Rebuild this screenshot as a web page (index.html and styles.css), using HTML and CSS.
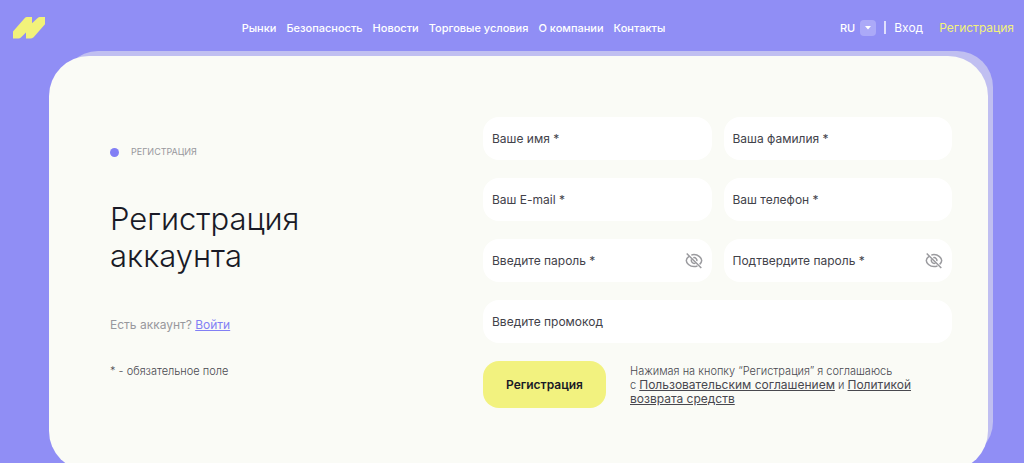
FILE: index.html
```html
<!DOCTYPE html>
<html lang="ru">
<head>
<meta charset="utf-8">
<meta name="viewport" content="width=device-width, initial-scale=1">
<title>Регистрация аккаунта</title>
<link rel="stylesheet" href="styles.css">
</head>
<body>
<header class="header">
  <a class="logo" href="#" aria-label="На главную">
    <svg width="32" height="22" viewBox="0 0 32 22" aria-hidden="true"><path d="M0 14.500 11.600 1.200Q12.600 0 14 0H19V6.200L24.700.9Q25.600 0 27 0H32V7.300L20.600 20.200Q19 21.500 17.500 21.500H13V15.500L7.900 20.600Q7 21.500 5.500 21.500H0Z" fill="#f2f27a"/></svg>
  </a>
  <nav class="nav">
    <a href="#">Рынки</a>
    <a href="#">Безопасность</a>
    <a href="#">Новости</a>
    <a href="#">Торговые условия</a>
    <a href="#">О компании</a>
    <a href="#">Контакты</a>
  </nav>
  <div class="account">
    <button class="lang" type="button">RU
      <span class="lang-arrow"><svg width="8" height="4" viewBox="0 0 8 4" aria-hidden="true"><path d="M1 0H7L4 3.500Z" fill="#fff"/></svg></span>
    </button>
    <span class="divider"></span>
    <a href="#">Вход</a>
    <a class="signup" href="#">Регистрация</a>
  </div>
</header>
<main class="card">
  <section class="intro">
    <p class="eyebrow">Регистрация</p>
    <h1 class="title">Регистрация аккаунта</h1>
    <p class="have-account">Есть аккаунт? <a href="#">Войти</a></p>
    <p class="required-note">* - обязательное поле</p>
  </section>
  <form class="form">
    <input class="input" type="text" aria-label="Ваше имя" placeholder="Ваше имя *">
    <input class="input" type="text" aria-label="Ваша фамилия" placeholder="Ваша фамилия *">
    <input class="input" type="email" aria-label="Ваш E-mail" placeholder="Ваш E-mail *">
    <input class="input" type="tel" aria-label="Ваш телефон" placeholder="Ваш телефон *">
    <div class="password">
      <input class="input" type="password" aria-label="Введите пароль" placeholder="Введите пароль *">
      <button class="eye" type="button" aria-label="Показать пароль"><svg width="18" height="18" viewBox="0 0 18 18" aria-hidden="true"><g fill="none" stroke="#9a9a9e" stroke-width="1.500"><path d="M1.700 1.500 16.300 16"/><path d="M4 4.300C2.300 5.500 1.300 7.200 1.300 8.500 1.300 11 4.600 14.600 9 14.600c1.300 0 2.500-.3 3.500-.8M6.300 3.100C7.100 2.800 8 2.600 9 2.600c4.400 0 7.700 3.500 7.700 6 0 1.200-.8 2.600-2.100 3.800"/><path d="M6.500 7.200A3 3 0 0 0 10.500 11.100M8.300 5.700A3 3 0 0 1 11.900 9.200"/></g></svg></button>
    </div>
    <div class="password">
      <input class="input" type="password" aria-label="Подтвердите пароль" placeholder="Подтвердите пароль *">
      <button class="eye" type="button" aria-label="Показать пароль"><svg width="18" height="18" viewBox="0 0 18 18" aria-hidden="true"><g fill="none" stroke="#9a9a9e" stroke-width="1.500"><path d="M1.700 1.500 16.300 16"/><path d="M4 4.300C2.300 5.500 1.300 7.200 1.300 8.500 1.300 11 4.600 14.600 9 14.600c1.300 0 2.500-.3 3.500-.8M6.300 3.100C7.100 2.800 8 2.600 9 2.600c4.400 0 7.700 3.500 7.700 6 0 1.200-.8 2.600-2.100 3.800"/><path d="M6.500 7.200A3 3 0 0 0 10.500 11.100M8.300 5.700A3 3 0 0 1 11.900 9.200"/></g></svg></button>
    </div>
    <input class="input wide" type="text" aria-label="Введите промокод" placeholder="Введите промокод">
    <div class="actions wide">
      <button class="submit" type="submit">Регистрация</button>
      <p class="terms">Нажимая на кнопку “Регистрация” я соглашаюсь<br>с <a href="#">Пользовательским соглашением</a> и <a href="#">Политикой возврата средств</a></p>
    </div>
  </form>
</main>
</body>
</html>
```

FILE: styles.css
```css
* {
  box-sizing: border-box;
}

body {
  margin: 0;
  background: #908ef5;
  color: #191a26;
  font-family: Inter, "Noto Sans", sans-serif;
  font-size: 12px;
  line-height: 16px;
}

a {
  color: inherit;
}

p,
h1 {
  margin: 0;
}

button {
  padding: 0;
  border: 0;
  background: none;
  color: inherit;
  font: inherit;
  cursor: pointer;
}

svg {
  display: block;
}

.header {
  display: grid;
  grid-template-columns: 1fr auto 1fr;
  align-items: center;
  height: 56px;
  padding: 0 10px 1px 13px;
  color: #fff;
}

.header a {
  text-decoration: none;
}

.logo {
  justify-self: start;
}

.nav {
  display: flex;
  gap: 10px;
  margin-right: 120px;
  font-size: 11px;
  font-weight: 500;
}

.account {
  display: flex;
  align-items: center;
  justify-self: end;
  gap: 8px;
}

.lang {
  display: flex;
  align-items: center;
  gap: 5px;
  font-size: 11px;
  font-weight: 500;
}

.lang-arrow {
  display: grid;
  place-items: center;
  width: 16px;
  height: 16px;
  border-radius: 4px;
  background: #aba9f8;
}

.divider {
  width: 2px;
  height: 13px;
  background: #e0dffc;
}

.signup {
  margin-left: 8px;
  color: #f2f27a;
}

.card {
  display: grid;
  grid-template-columns: 373fr 469fr;
  margin: 0 36px 0 49px;
  padding: 61px 36px 63px 61px;
  border-radius: 40px;
  background: #fafbf6;
  box-shadow: 9px -9px 0 -4px #c0bff1;
}

.eyebrow {
  display: flex;
  align-items: center;
  gap: 12px;
  margin-top: 27px;
  color: #98989d;
  font-size: 9px;
  text-transform: uppercase;
}

.eyebrow::before {
  width: 9px;
  height: 9px;
  border-radius: 50%;
  background: #827ff5;
  content: "";
}

.title {
  max-width: 240px;
  margin-top: 40px;
  font-size: 31px;
  font-weight: 300;
  line-height: 37px;
}

.have-account {
  margin-top: 43px;
  color: #98989d;
}

.have-account a {
  color: #827ff5;
}

.required-note {
  margin-top: 30px;
  color: #48484f;
  font-size: 11px;
  font-weight: 300;
}

.form {
  display: grid;
  grid-template-columns: 1fr 1fr;
  gap: 18px 12px;
  align-content: start;
}

.wide {
  grid-column: 1 / -1;
}

.input {
  display: block;
  width: 100%;
  height: 43px;
  padding: 0 9px;
  border: 0;
  border-radius: 16px;
  background: #fff;
  color: #191a26;
  font: inherit;
}

.input::placeholder {
  color: #42424a;
  opacity: 1;
}

.password {
  position: relative;
}

.password .input {
  padding-right: 36px;
}

.eye {
  position: absolute;
  top: 13px;
  right: 9px;
}

.actions {
  display: flex;
  align-items: center;
  gap: 24px;
}

.submit {
  flex: none;
  width: 123px;
  height: 47px;
  border-radius: 16px;
  background: #f2f27f;
  font-size: 12px;
  font-weight: 600;
}

.terms {
  color: #48484f;
  font-size: 11px;
  font-weight: 300;
  line-height: 14px;
}

.terms a {
  font-size: 12px;
  font-weight: 400;
}
```
